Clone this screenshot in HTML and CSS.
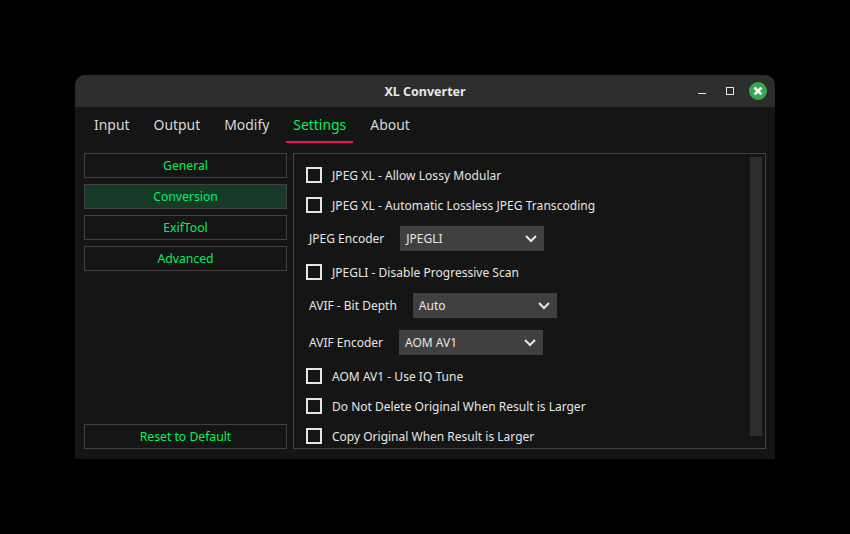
FILE: index.html
```html
<!DOCTYPE html>
<html>
<head>
  <meta charset="utf-8" />
  <title>XL Converter</title>
  <link rel="stylesheet" href="styles.css">
</head>
<body>

<div class="window">
  <div class="titlebar">
    <span class="title">XL Converter</span>
    <div class="controls">
      <svg class="ctl-min" width="10" height="10" viewBox="0 0 10 10"><rect x="1" y="7" width="8" height="1" fill="#e8e8e8"/></svg>
      <svg class="ctl" width="10" height="10" viewBox="0 0 10 10"><rect x="1.5" y="1.5" width="7" height="7" fill="none" stroke="#e8e8e8"/></svg>
      <svg class="ctl" width="18" height="18" viewBox="0 0 18 18">
        <circle cx="9" cy="9" r="9" fill="#36a854"/>
        <path d="M5.6 5.6l6.8 6.8M12.4 5.6l-6.8 6.8" stroke="#fff" stroke-width="2.6"/>
      </svg>
    </div>
  </div>

  <div class="tabs">
    <div class="tab">Input</div>
    <div class="tab">Output</div>
    <div class="tab">Modify</div>
    <div class="tab active">Settings</div>
    <div class="tab">About</div>
  </div>

  <div class="content">
    <div class="sidebar">
      <div class="btn">General</div>
      <div class="btn selected">Conversion</div>
      <div class="btn">ExifTool</div>
      <div class="btn">Advanced</div>
      <div class="btn reset">Reset to Default</div>
    </div>

    <div class="panel">
      <div class="options">
        <label class="check first wide"><span class="box"></span>JPEG XL - Allow Lossy Modular</label>
        <label class="check wide"><span class="box"></span>JPEG XL - Automatic Lossless JPEG Transcoding</label>
        <div class="field">
          <span class="field-name">JPEG Encoder</span>
          <div class="select"><span>JPEGLI</span><svg width="12" height="8" viewBox="0 0 12 8"><path d="M1 1l5 5 5-5" fill="none" stroke="#e8e8e8" stroke-width="2"/></svg></div>
        </div>
        <label class="check slight"><span class="box"></span>JPEGLI - Disable Progressive Scan</label>
        <div class="field">
          <span class="field-name">AVIF - Bit Depth</span>
          <div class="select"><span>Auto</span><svg width="12" height="8" viewBox="0 0 12 8"><path d="M1 1l5 5 5-5" fill="none" stroke="#e8e8e8" stroke-width="2"/></svg></div>
        </div>
        <div class="field">
          <span class="field-name">AVIF Encoder</span>
          <div class="select"><span>AOM AV1</span><svg width="12" height="8" viewBox="0 0 12 8"><path d="M1 1l5 5 5-5" fill="none" stroke="#e8e8e8" stroke-width="2"/></svg></div>
        </div>
        <label class="check slight"><span class="box"></span>AOM AV1 - Use IQ Tune</label>
        <label class="check"><span class="box"></span>Do Not Delete Original When Result is Larger</label>
        <label class="check"><span class="box"></span>Copy Original When Result is Larger</label>
      </div>
      <div class="scrollbar"></div>
    </div>
  </div>
</div>

</body>
</html>
```

FILE: styles.css
```css
html { height: 100%; }
body {
  margin: 0;
  height: 534px;
  background: #000;
  display: flex;
  align-items: center;
  justify-content: center;
  overflow: hidden;
  font: 12px "Noto Sans", sans-serif;
  color: #e6e6e6;
}
.window {
  width: 700px;
  height: 384px;
  background: #151515;
  border-radius: 10px 10px 0 0;
  overflow: hidden;
  display: flex;
  flex-direction: column;
}
.titlebar {
  height: 32px;
  flex: none;
  background: #2d2d2d;
  display: flex;
  align-items: center;
  justify-content: center;
  position: relative;
}
.title {
  font-weight: 700;
  font-size: 12.5px;
  color: #e8e8e8;
}
.controls {
  position: absolute;
  top: 7px;
  right: 8px;
  display: flex;
  align-items: center;
  gap: 14px;
}
.ctl-min {
  margin-right: 4px;
}
.tabs {
  display: flex;
  gap: 10px;
  padding: 0 12px;
  height: 36px;
  flex: none;
}
.tab {
  padding: 1px 7px 0;
  font-size: 13.93px;
  line-height: 34px;
  color: #d8d8d8;
  height: 33px;
  border-bottom: 2px solid transparent;
}
.tab.active {
  color: #00f060;
  border-bottom-color: #f0105f;
}
.content {
  display: flex;
  gap: 6px;
  padding: 10px 9px;
  flex: 1;
  min-height: 0;
}
.sidebar {
  width: 203px;
  display: flex;
  flex-direction: column;
  gap: 6px;
}
.btn {
  height: 25px;
  box-sizing: border-box;
  border: 1px solid #414141;
  color: #00f060;
  text-align: center;
  font-size: 12.2px;
  line-height: 23px;
}
.btn.selected {
  background: #173a28;
}
.btn.reset {
  margin-top: auto;
}
.panel {
  flex: 1;
  border: 1px solid #414141;
  display: flex;
  justify-content: space-between;
  padding: 3px 3px 12px 12px;
}
.options {
  display: flex;
  flex-direction: column;
  align-items: flex-start;
}
.check {
  display: flex;
  align-items: flex-start;
  gap: 10px;
  height: 16px;
  margin-top: 14px;
  line-height: 18px;
}
.check.first {
  margin-top: 10px;
}
.wide {
  letter-spacing: 0.05px;
}
.slight {
  letter-spacing: 0.02px;
}
.box {
  width: 16px;
  height: 16px;
  box-sizing: border-box;
  border: 2px solid #e6e6e6;
}
.field {
  display: flex;
  align-items: center;
  gap: 16px;
  height: 25px;
  padding-left: 3px;
  margin: 13px 0 -1px;
}
.select {
  width: 144px;
  height: 25px;
  background: #404040;
  display: flex;
  align-items: center;
  justify-content: space-between;
  box-sizing: border-box;
  padding: 0 7px 0 6px;
}
.scrollbar {
  width: 12px;
  background: #2d2d2d;
}
```
